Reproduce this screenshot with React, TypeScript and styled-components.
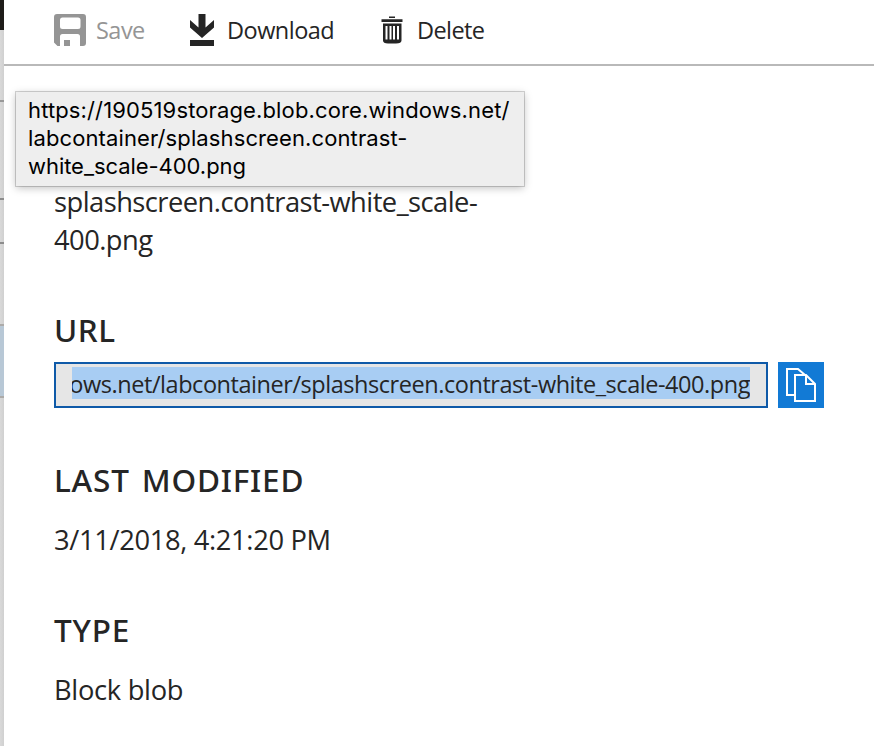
import React from 'react';
import styled, { createGlobalStyle } from 'styled-components';

const GlobalStyle = createGlobalStyle`
  *, *::before, *::after { box-sizing: border-box; }
  body { margin: 0; background: #fff; color: #252525; font-family: 'Open Sans', 'Noto Sans', sans-serif; }
`;

const Page = styled.div`
  display: flex;
  width: 874px;
  height: 746px;
  overflow: hidden;
`;

const Edge = styled.aside`
  display: flex;
  flex-direction: column;
  flex: 0 0 4px;
  background: linear-gradient(to right, #d9d9d9, #d0d0d0);
`;

const EdgeBlock = styled.div<{ $height: number; $color?: string }>`
  flex: 0 0 ${(p) => p.$height}px;
  background: ${(p) => p.$color ?? 'transparent'};
`;

const Blade = styled.main`
  position: relative;
  flex: 1;
  min-width: 0;
`;

const Toolbar = styled.header`
  display: flex;
  height: 66px;
  padding-left: 50px;
  border-bottom: 2px solid #b9b9b9;
`;

const ToolButton = styled.button<{ $disabled?: boolean; $width: number; $gap: number; $spacing?: number }>`
  display: flex;
  flex: 0 0 ${(p) => p.$width}px;
  align-items: center;
  gap: ${(p) => p.$gap}px;
  height: 60px;
  padding: 0;
  border: 0;
  background: none;
  color: ${(p) => (p.$disabled ? '#959595' : '#252525')};
  font: 400 23.5px/60px 'Open Sans', sans-serif;
  letter-spacing: ${(p) => p.$spacing ?? -0.52}px;
  white-space: nowrap;

  svg { display: block; flex: none; }
`;

const Details = styled.div`
  display: flex;
  flex-direction: column;
  padding: 116px 50px 0;
`;

const Value = styled.p<{ $spacing: number }>`
  margin: 0 0 -1px;
  padding-top: 1px;
  width: 440px;
  font-size: 27.3px;
  line-height: 38px;
  letter-spacing: ${(p) => p.$spacing}px;
`;

const Field = styled.section<{ $gap: number }>`
  display: flex;
  flex-direction: column;
  gap: ${(p) => p.$gap}px;
  margin-top: 50px;
`;

const Label = styled.h2<{ $spacing: number }>`
  margin: 0;
  font: 500 31.5px/44px 'Noto Sans', sans-serif;
  letter-spacing: ${(p) => p.$spacing}px;
  word-spacing: 3px;
`;

const UrlRow = styled.div`
  display: flex;
  gap: 10px;
`;

const UrlBox = styled.div`
  display: flex;
  align-items: flex-start;
  width: 714px;
  height: 46px;
  padding: 3px 16px;
  border: 2px solid #0f5aa8;
  background: #e6e6e6;
`;

const UrlClip = styled.div`
  display: flex;
  justify-content: flex-end;
  width: 678px;
  height: 32px;
  overflow: hidden;
  background: #a8cdf3;
`;

const UrlText = styled.span`
  flex: none;
  font-size: 23.5px;
  line-height: 35px;
  letter-spacing: -0.45px;
  white-space: nowrap;
`;

const CopyButton = styled.button`
  width: 46px;
  height: 46px;
  padding: 0;
  border: 0;
  background: #127ad5;

  svg { display: block; }
`;

const Tooltip = styled.div`
  position: absolute;
  top: 92px;
  left: 12px;
  display: flex;
  flex-direction: column;
  width: 508px;
  height: 94px;
  padding: 4px 12px;
  background: #eeeeee;
  box-shadow: 0 0 0 1px rgba(0, 0, 0, 0.17), 0 2px 8px rgba(0, 0, 0, 0.25);
  color: #000;
  font: 400 22px/28px Inter, sans-serif;
  white-space: nowrap;
`;

const TooltipLine = styled.span<{ $spacing: number }>`
  letter-spacing: ${(p) => p.$spacing}px;
`;

const SaveIcon = () => (
  <svg width="32" height="32" viewBox="0 0 32 32" fill="#959595">
    <path
      fillRule="evenodd"
      d="M3 0H29Q32 0 32 3V29Q32 32 29 32H26V22.500Q26 20 23.500 20H8.500Q6 20 6 22.500V32H3.500L0 28.500V3Q0 0 3 0ZM8.500 3.500Q6 3.500 6 6V12.500Q6 15 8.500 15H24Q26.500 15 26.500 12.500V6Q26.500 3.500 24 3.500Z"
    />
    <path d="M10 26H16V32H10Z" />
  </svg>
);

const DownloadIcon = () => (
  <svg width="24" height="32" viewBox="0 0 24 32" fill="#252525">
    <path d="M8.500 0H15.500V13.500L24 6V13.500L12 24L0 13.500V6L8.500 13.500ZM0 26H24V32H0Z" />
  </svg>
);

const DeleteIcon = () => (
  <svg width="22" height="28" viewBox="0 0 22 28" fill="#252525">
    <path d="M8 0.500H14V2H8ZM0.500 3.200H21.500V6H0.500Z" />
    <path
      fillRule="evenodd"
      d="M2 7.500H20.500V24.500Q20.500 27.500 15 27.500H7Q2 27.500 2 24.500ZM4.500 10V23.500H6.500V10ZM8.500 10V23.500H10.500V10ZM12 10V23.500H14V10ZM16 10V23.500H18V10Z"
    />
  </svg>
);

const CopyIcon = () => (
  <svg width="46" height="46" viewBox="0 0 46 46" fill="none" stroke="#fff" strokeWidth="2">
    <path d="M17 33H9V7H20L27 13" />
    <path d="M17 13H28L37 22V39H17Z" fill="#127ad5" />
    <path d="M28 13V22H37" />
  </svg>
);

export default function App() {
  return (
    <>
      <GlobalStyle />
      <Page>
        <Edge>
          <EdgeBlock $height={30} $color="#1e1c19" />
          <EdgeBlock $height={70} />
          <EdgeBlock $height={2} $color="#999" />
          <EdgeBlock $height={96} />
          <EdgeBlock $height={2} $color="#8c8c8c" />
          <EdgeBlock $height={42} />
          <EdgeBlock $height={2} $color="#8c8c8c" />
          <EdgeBlock $height={80} />
          <EdgeBlock $height={2} $color="#adaba9" />
          <EdgeBlock $height={70} $color="#b8c8d6" />
          <EdgeBlock $height={2} $color="#adaba9" />
        </Edge>
        <Blade>
          <Toolbar>
            <ToolButton $disabled $width={136} $gap={10}>
              <SaveIcon />
              Save
            </ToolButton>
            <ToolButton $width={191} $gap={13}>
              <DownloadIcon />
              Download
            </ToolButton>
            <ToolButton $width={110} $gap={14} $spacing={-0.6}>
              <DeleteIcon />
              Delete
            </ToolButton>
          </Toolbar>
          <Details>
            <Value $spacing={-0.53}>splashscreen.contrast-white_scale-400.png</Value>
            <Field $gap={10}>
              <Label $spacing={0.6}>URL</Label>
              <UrlRow>
                <UrlBox>
                  <UrlClip>
                    <UrlText>
                      https://190519storage.blob.core.windows.net/labcontainer/splashscreen.contrast-white_scale-400.png
                    </UrlText>
                  </UrlClip>
                </UrlBox>
                <CopyButton aria-label="Copy URL">
                  <CopyIcon />
                </CopyButton>
              </UrlRow>
            </Field>
            <Field $gap={18}>
              <Label $spacing={0.8}>LAST MODIFIED</Label>
              <Value $spacing={-0.34}>3/11/2018, 4:21:20 PM</Value>
            </Field>
            <Field $gap={18}>
              <Label $spacing={0.85}>TYPE</Label>
              <Value $spacing={-0.3}>Block blob</Value>
            </Field>
          </Details>
          <Tooltip role="tooltip">
            <TooltipLine $spacing={0.13}>https://190519storage.blob.core.windows.net/</TooltipLine>
            <TooltipLine $spacing={0.11}>labcontainer/splashscreen.contrast-</TooltipLine>
            <TooltipLine $spacing={-0.05}>white_scale-400.png</TooltipLine>
          </Tooltip>
        </Blade>
      </Page>
    </>
  );
}
